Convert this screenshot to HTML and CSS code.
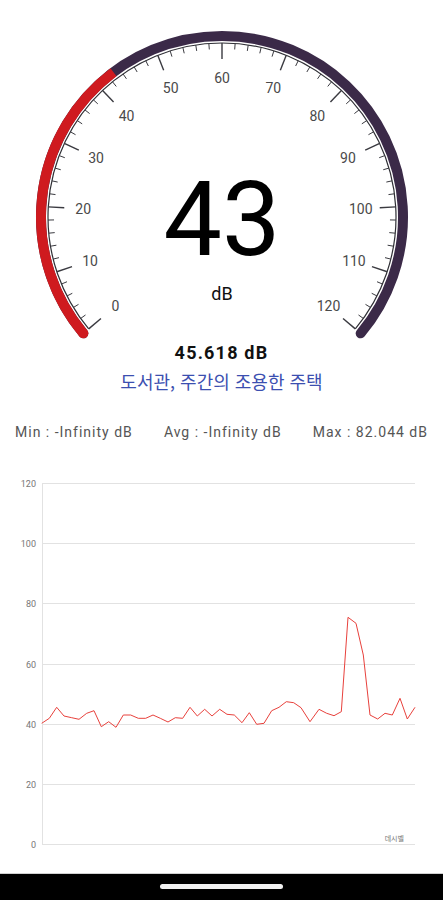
FILE: index.html
```html
<!DOCTYPE html>
<html lang="ko">
<head>
    <meta charset="UTF-8">
    <meta name="viewport" content="width=device-width, initial-scale=1.0">
    <title>소음 측정기</title>
    <link rel="stylesheet" href="styles.css">
</head>
<body>
    <div class="gauge">
        <svg id="gaugeSvg" width="443" height="340" viewBox="0 0 443 340">
            <g id="arcs"></g>
            <g id="ticks"></g>
            <g id="labels"></g>
            <text class="gauge-value" x="222" y="255" text-anchor="middle">43</text>
            <text class="gauge-unit" x="222" y="300" text-anchor="middle">dB</text>
        </svg>
    </div>

    <div class="reading">45.618 dB</div>
    <div class="level-desc">도서관, 주간의 조용한 주택</div>

    <div class="stats">
        <span>Min : -Infinity dB</span>
        <span>Avg : -Infinity dB</span>
        <span>Max : 82.044 dB</span>
    </div>

    <div class="chart">
        <svg id="chartSvg" width="443" height="413" viewBox="0 460 443 413">
            <g id="grid"></g>
            <polyline id="line" class="chart-line" points=""></polyline>
            <text class="x-title" x="404" y="841" text-anchor="end">데시벨</text>
        </svg>
    </div>

    <div class="nav-bar">
        <div class="home-pill"></div>
    </div>

    <script>
        const NS = 'http://www.w3.org/2000/svg';
        const cx = 222, cy = 217;

        // angulo a partir do topo, sentido horario (260 graus no total)
        function angle(v) {
            return (-130 + v / 120 * 260) * Math.PI / 180;
        }
        function pt(v, r) {
            const a = angle(v);
            return [cx + r * Math.sin(a), cy - r * Math.cos(a)];
        }
        function arcPath(v1, v2, r) {
            const [x1, y1] = pt(v1, r);
            const [x2, y2] = pt(v2, r);
            const large = (v2 - v1) / 120 * 260 > 180 ? 1 : 0;
            return `M${x1} ${y1} A${r} ${r} 0 ${large} 1 ${x2} ${y2}`;
        }
        function el(tag, attrs, parent) {
            const e = document.createElementNS(NS, tag);
            for (const k in attrs) e.setAttribute(k, attrs[k]);
            parent.appendChild(e);
            return e;
        }

        const arcs = document.getElementById('arcs');
        const value = 43;
        el('path', { d: arcPath(0, 120, 181), class: 'arc-rest' }, arcs);
        el('path', { d: arcPath(0, value, 181), class: 'arc-value' }, arcs);
        const [sx, sy] = pt(0, 181);
        el('circle', { cx: sx, cy: sy, r: 5, class: 'arc-cap' }, arcs);
        el('path', { d: arcPath(0, 120, 174), class: 'ring' }, arcs);

        const ticks = document.getElementById('ticks');
        const labels = document.getElementById('labels');
        for (let v = 0; v <= 120; v += 2) {
            const major = v % 10 === 0;
            const [x1, y1] = pt(v, 174);
            const [x2, y2] = pt(v, major ? 158 : 168);
            el('line', { x1, y1, x2, y2, class: major ? 'tick major' : 'tick' }, ticks);
            if (major) {
                const [lx, ly] = pt(v, 139);
                const t = el('text', { x: lx, y: ly + 5, 'text-anchor': 'middle', class: 'tick-label' }, labels);
                t.textContent = v;
            }
        }

        // grafico
        const grid = document.getElementById('grid');
        for (let v = 0; v <= 120; v += 20) {
            const y = Math.round(844 - v * 3.008) + 0.5;
            el('line', { x1: 42, y1: y, x2: 415, y2: y, class: 'grid-line' }, grid);
            const t = el('text', { x: 36, y: y + 3, 'text-anchor': 'end', class: 'axis-label' }, grid);
            t.textContent = v;
        }
        el('line', { x1: 42.5, y1: 483, x2: 42.5, y2: 845, class: 'grid-line' }, grid);

        const dados = [
            [41.7, 723.3], [49.3, 718.3], [56.7, 707.3], [64, 716], [71.7, 717.7],
            [79, 719.3], [86.7, 713.3], [94, 710.7], [101.3, 726.7], [108.7, 721.7],
            [116, 727.3], [123.3, 715], [130.7, 715], [138.3, 718.3], [145.7, 718.3],
            [153, 715], [160.3, 718.3], [168, 722], [175.3, 717.7], [182.7, 718.3],
            [190, 707.3], [197.3, 716], [204.7, 709.3], [212, 716], [219.7, 709.3],
            [227, 714.3], [234.3, 715], [242, 722.7], [249.3, 712.7], [256.7, 724.3],
            [264, 723.3], [271.7, 710.7], [279, 707.3], [286.3, 701.7], [293.7, 702.7],
            [301, 707.7], [310, 721.7], [319, 709.3], [326.7, 713.3], [334, 715.7],
            [341.3, 711.7], [348, 617.3], [356, 623.3], [363.3, 655], [370, 715],
            [377.7, 719], [385, 713.3], [392.3, 715], [400, 698.3], [407.3, 719],
            [415, 707.3]
        ];
        document.getElementById('line').setAttribute('points', dados.map(p => p.join(',')).join(' '));
    </script>
</body>
</html>
```

FILE: styles.css
```css
body {
    font-family: Roboto, "Noto Sans", "Noto Sans CJK KR", sans-serif;
    margin: 0;
    padding: 0;
    width: 443px;
    height: 900px;
    background-color: #ffffff;
    display: flex;
    flex-direction: column;
    overflow: hidden;
}
.gauge {
    height: 340px;
}
.gauge svg {
    display: block;
}
.arc-rest {
    fill: none;
    stroke: #3b2a48;
    stroke-width: 10;
    stroke-linecap: round;
}
.arc-value {
    fill: none;
    stroke: #cf1a1f;
    stroke-width: 10;
    stroke-linecap: butt;
}
.arc-cap {
    fill: #cf1a1f;
}
.ring {
    fill: none;
    stroke: #2f2f35;
    stroke-width: 1.2;
}
.tick {
    stroke: #3a3a40;
    stroke-width: 1;
}
.tick.major {
    stroke-width: 1.4;
}
.tick-label {
    font-family: Roboto, sans-serif;
    font-size: 14px;
    fill: #4a4a4a;
}
.gauge-value {
    font-family: Roboto, sans-serif;
    font-size: 104px;
    fill: #000000;
}
.gauge-unit {
    font-family: Roboto, sans-serif;
    font-size: 18px;
    fill: #111111;
}
.reading {
    text-align: center;
    font-size: 18px;
    font-weight: bold;
    letter-spacing: 1.2px;
    line-height: 26px;
    color: #111111;
}
.level-desc {
    text-align: center;
    font-family: "Noto Sans CJK KR", sans-serif;
    font-size: 18px;
    line-height: 30px;
    color: #3c4fb0;
}
.stats {
    display: flex;
    justify-content: space-between;
    padding: 0 15px;
    margin-top: 26px;
    font-size: 14px;
    letter-spacing: 1px;
    line-height: 20px;
    color: #555555;
}
.chart {
    margin-top: 18px;
    height: 413px;
}
.chart svg {
    display: block;
}
.grid-line {
    stroke: #e2e2e2;
    stroke-width: 1;
}
.axis-label {
    font-family: Roboto, sans-serif;
    font-size: 9px;
    fill: #777777;
}
.chart-line {
    fill: none;
    stroke: #e8413c;
    stroke-width: 1;
    stroke-linejoin: round;
}
.x-title {
    font-family: "Noto Sans CJK KR", sans-serif;
    font-size: 7px;
    fill: #777777;
}
.nav-bar {
    flex: 1;
    background-color: #000000;
    border-top: 1px solid #d0d0d0;
    display: flex;
    justify-content: center;
    padding-top: 10px;
    box-sizing: border-box;
}
.home-pill {
    width: 123px;
    height: 5px;
    border-radius: 3px;
    background-color: #f2f2f2;
}
```
